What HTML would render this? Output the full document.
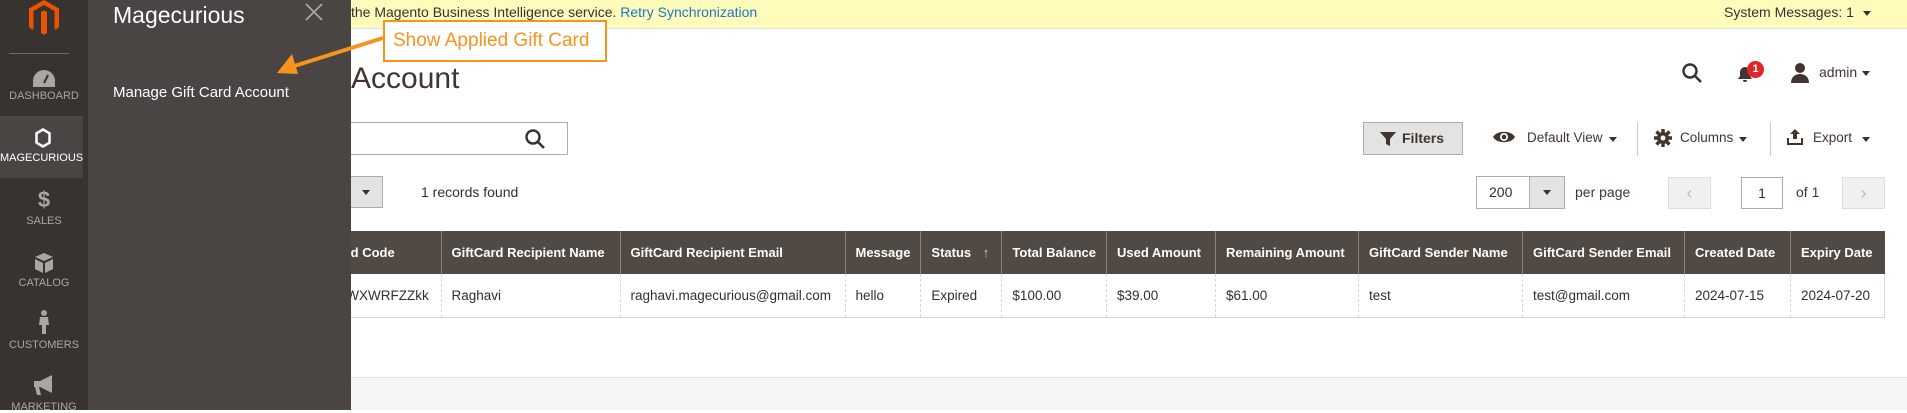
<!DOCTYPE html>
<html><head><meta charset="utf-8"><style>
*{box-sizing:border-box;margin:0;padding:0}
body{width:1907px;height:410px;overflow:hidden;background:#fff;font-family:"Liberation Sans",sans-serif;color:#303030;position:relative;font-size:14px}
.a{position:absolute;white-space:nowrap}
.nav{left:0;top:0;width:88px;height:410px;background:#373330}
.navl{color:#aaa6a0;font-size:11px;width:88px;text-align:center;left:0}
.fly{left:88px;top:0;width:263px;height:410px;background:#4a4542}
.msg{left:351px;top:0;width:1556px;height:29px;background:#fffbbb;border-bottom:1px solid #ddd}
table{border-collapse:collapse;position:absolute;top:231px;font-size:13.5px}
th{background:#514943;color:#fff;font-weight:bold;text-align:left;height:43px;padding:0 10px;border-left:1px solid #8a837f;font-size:13px;white-space:nowrap}
td{height:43px;padding:0 10px;border-left:1px dashed #d6d6d6;border-bottom:1px solid #d6d6d6;color:#303030;white-space:nowrap}
.btn{border:1px solid #adadad;background:#e3e3e3}
.sep{width:1px;height:34px;background:#ccc;top:122px}
.caret{display:inline-block;width:0;height:0;border-left:4px solid transparent;border-right:4px solid transparent;border-top:5px solid #333}
</style></head><body>
<div class="a msg"></div>
<div class="a" style="left:351px;top:4px;font-size:14px;color:#333">the Magento Business Intelligence service. <span style="color:#1979c3">Retry Synchronization</span></div>
<div class="a" style="left:1724px;top:4px;font-size:14px;color:#333">System Messages: 1</div>
<div class="a caret" style="left:1863px;top:11px"></div>

<div class="a" style="left:351px;top:62px;font-size:30px;color:#41362f">Account</div>

<svg class="a" style="left:1681px;top:62px" width="22" height="22" viewBox="0 0 22 22"><circle cx="9" cy="9" r="6.5" fill="none" stroke="#333" stroke-width="2.4"/><path d="M14 14l6 6" stroke="#333" stroke-width="2.6"/></svg>
<svg class="a" style="left:1735px;top:64px" width="20" height="20" viewBox="0 0 20 20"><path d="M3 15h14l-2-3V8a5 5 0 0 0-10 0v4z M8 16a2 2 0 0 0 4 0z" fill="#41362f"/></svg>
<div class="a" style="left:1747px;top:61px;width:17px;height:17px;border-radius:50%;background:#e22626;color:#fff;font-size:11px;font-weight:bold;text-align:center;line-height:17px">1</div>
<svg class="a" style="left:1790px;top:62px" width="20" height="22" viewBox="0 0 20 22"><circle cx="10" cy="6" r="5" fill="#41362f"/><path d="M1 21c0-6 4-9 9-9s9 3 9 9z" fill="#41362f"/></svg>
<div class="a" style="left:1819px;top:64px;font-size:14px;color:#41362f">admin</div>
<div class="a caret" style="left:1862px;top:71px"></div>

<div class="a" style="left:351px;top:122px;width:217px;height:33px;border:1px solid #adadad;border-left:none"></div>
<svg class="a" style="left:524px;top:128px" width="22" height="22" viewBox="0 0 22 22"><circle cx="9" cy="9" r="6.5" fill="none" stroke="#333" stroke-width="2.4"/><path d="M14 14l6 6" stroke="#333" stroke-width="2.6"/></svg>

<div class="a btn" style="left:1363px;top:122px;width:100px;height:33px"></div>
<svg class="a" style="left:1380px;top:131px" width="16" height="16" viewBox="0 0 16 16"><path d="M0 1h16l-6 7v7l-4-2V8z" fill="#41362f"/></svg>
<div class="a" style="left:1402px;top:130px;font-weight:bold;color:#41362f">Filters</div>
<svg class="a" style="left:1492px;top:129px" width="24" height="16" viewBox="0 0 24 16"><path d="M1 8C5 1 19 1 23 8 19 15 5 15 1 8z" fill="#41362f"/><circle cx="12" cy="8" r="4" fill="#fff"/><circle cx="12" cy="8" r="2.3" fill="#41362f"/></svg>
<div class="a" style="left:1527px;top:130px;color:#41362f;font-size:13.5px">Default View</div>
<div class="a caret" style="left:1609px;top:137px"></div>
<div class="a sep" style="left:1637px"></div>
<svg class="a" style="left:1654px;top:129px" width="18" height="18" viewBox="0 0 18 18"><circle cx="9" cy="9" r="6" fill="#41362f"/><g stroke="#41362f" stroke-width="3.4"><path d="M9 0v18M0 9h18M2.5 2.5l13 13M15.5 2.5l-13 13"/></g><circle cx="9" cy="9" r="2.5" fill="#fff"/></svg>
<div class="a" style="left:1680px;top:130px;color:#41362f;font-size:13.5px">Columns</div>
<div class="a caret" style="left:1739px;top:137px"></div>
<div class="a sep" style="left:1770px"></div>
<svg class="a" style="left:1786px;top:129px" width="18" height="17" viewBox="0 0 18 17"><path d="M9 0l5 5h-3v5H7V5H4z M1 9h2v5h12V9h2v7H1z" fill="#41362f"/></svg>
<div class="a" style="left:1813px;top:130px;color:#41362f;font-size:13.5px">Export</div>
<div class="a caret" style="left:1862px;top:137px"></div>

<div class="a btn" style="left:340px;top:176px;width:43px;height:32px"></div>
<div class="a caret" style="left:362px;top:190px"></div>
<div class="a" style="left:421px;top:184px;font-size:14px">1 records found</div>
<div class="a" style="left:1476px;top:176px;width:89px;height:33px;border:1px solid #adadad"></div>
<div class="a" style="left:1529px;top:177px;width:35px;height:31px;background:#e3e3e3;border-left:1px solid #adadad"></div>
<div class="a caret" style="left:1543px;top:190px"></div>
<div class="a" style="left:1489px;top:184px">200</div>
<div class="a" style="left:1575px;top:184px;color:#41362f">per page</div>
<div class="a" style="left:1668px;top:177px;width:43px;height:32px;background:#f0f0f0;border:1px solid #ddd;color:#bbb;text-align:center;line-height:30px;font-size:18px">&#8249;</div>
<div class="a" style="left:1741px;top:177px;width:42px;height:32px;border:1px solid #adadad;text-align:center;line-height:30px">1</div>
<div class="a" style="left:1796px;top:184px;color:#41362f">of 1</div>
<div class="a" style="left:1842px;top:177px;width:43px;height:32px;background:#f0f0f0;border:1px solid #ddd;color:#bbb;text-align:center;line-height:30px;font-size:18px">&#8250;</div>

<table style="left:300px;width:1585px">
<tr><th style="width:141px;border-left:none;padding-left:29px">Card Code</th><th style="width:179px">GiftCard Recipient Name</th><th style="width:225px">GiftCard Recipient Email</th><th style="width:75px">Message</th><th style="width:81px">Status <span style="font-weight:normal;color:#ccc;margin-left:8px">↑</span></th><th style="width:104px">Total Balance</th><th style="width:109px">Used Amount</th><th style="width:143px">Remaining Amount</th><th style="width:164px">GiftCard Sender Name</th><th style="width:162px">GiftCard Sender Email</th><th style="width:106px">Created Date</th><th>Expiry Date</th></tr>
<tr><td style="border-left:none;padding-left:29px">UeWXWRFZZkk</td><td>Raghavi</td><td>raghavi.magecurious@gmail.com</td><td>hello</td><td>Expired</td><td>$100.00</td><td>$39.00</td><td>$61.00</td><td>test</td><td>test@gmail.com</td><td>2024-07-15</td><td style="border-right:1px solid #d6d6d6">2024-07-20</td></tr>
</table>

<div class="a" style="left:351px;top:377px;width:1556px;height:33px;background:#f5f5f5;border-top:1px solid #e3e3e3"></div>

<div class="a nav"></div>
<svg class="a" style="left:28px;top:0" width="32" height="36" viewBox="0 0 32 36"><path d="M16 0L31 8.5v19l-4.5 2.5V11L16 5 5.5 11v19L1 27.5v-19z M13 12l3-1.8 3 1.8v21l-3 1.8-3-1.8z" fill="#eb5202"/></svg>
<div class="a" style="left:9px;top:53px;width:60px;height:1px;background:#736963"></div>
<svg class="a" style="left:33px;top:70px" width="22" height="17" viewBox="0 0 22 17"><path d="M11 0A11 11 0 0 0 0 11v6h22v-6A11 11 0 0 0 11 0z" fill="#aaa6a0"/><path d="M11 13l4-8" stroke="#373330" stroke-width="2"/></svg>
<div class="a navl" style="top:90px">DASHBOARD</div>
<div class="a" style="left:0;top:116px;width:83px;height:62px;background:#4a4542"></div>
<svg class="a" style="left:34px;top:128px" width="18" height="20" viewBox="0 0 18 20"><path d="M9 1.5l6.5 3.8v9.4L9 18.5 2.5 14.7V5.3z" fill="none" stroke="#fff" stroke-width="2.5"/></svg>
<div class="a navl" style="top:152px;color:#fff;width:83px">MAGECURIOUS</div>
<div class="a" style="left:0;top:187px;width:88px;text-align:center;color:#aaa6a0;font-size:22px;font-weight:bold">$</div>
<div class="a navl" style="top:215px">SALES</div>
<svg class="a" style="left:34px;top:253px" width="20" height="20" viewBox="0 0 20 20"><path d="M10 0l9 4-9 4-9-4z M1 6l8 4v10l-8-4z M11 10l8-4v10l-8 4z" fill="#aaa6a0"/></svg>
<div class="a navl" style="top:277px">CATALOG</div>
<svg class="a" style="left:37px;top:310px" width="14" height="24" viewBox="0 0 14 24"><circle cx="7" cy="3" r="3" fill="#aaa6a0"/><path d="M3 7h8l1 8H9v9H5v-9H2z" fill="#aaa6a0"/></svg>
<div class="a navl" style="top:339px">CUSTOMERS</div>
<svg class="a" style="left:32px;top:375px" width="24" height="22" viewBox="0 0 24 22"><path d="M2 6h6l12-6v18L8 12H7l2 8H5L3 12H2z" fill="#aaa6a0"/></svg>
<div class="a navl" style="top:401px">MARKETING</div>

<div class="a fly"></div>
<div class="a" style="left:113px;top:2px;font-size:23px;color:#fff">Magecurious</div>
<svg class="a" style="left:305px;top:3px" width="18" height="18" viewBox="0 0 18 18"><path d="M1 1l16 16M17 1L1 17" stroke="#aaa6a0" stroke-width="1.8"/></svg>
<div class="a" style="left:113px;top:84px;font-size:15px;color:#fff">Manage Gift Card Account</div>

<div class="a" style="left:383px;top:20px;width:224px;height:42px;border:2px solid #f7941d;background:#fff;color:#f7941d;font-size:19px;line-height:38px;padding-left:8px">Show Applied Gift Card</div>
<svg class="a" style="left:270px;top:30px" width="120" height="50" viewBox="0 0 120 50"><path d="M113 8L18 38" stroke="#f7941d" stroke-width="4"/><path d="M7 43L22 24 28 44z" fill="#f7941d"/></svg>
</body></html>
